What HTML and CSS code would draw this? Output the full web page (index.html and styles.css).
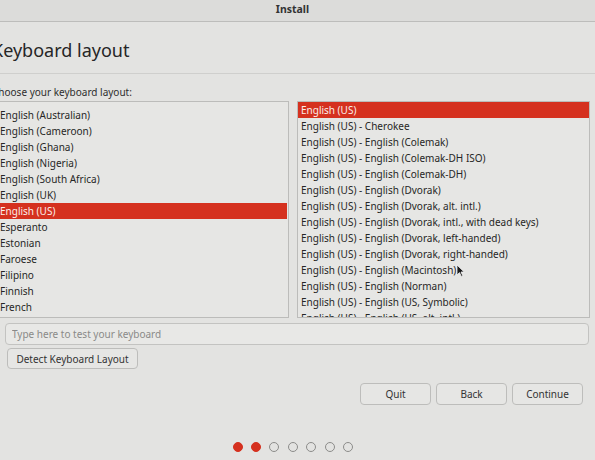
FILE: index.html
```html
<!DOCTYPE html>
<html lang="en">
<head>
<meta charset="utf-8">
<title>Install</title>
<link rel="stylesheet" href="styles.css">
</head>
<body>
<div class="titlebar">Install</div>
<div class="main">
  <div class="header"><h1 class="heading">Keyboard layout</h1></div>
  <div class="label">Choose your keyboard layout:</div>
  <div class="lists">
    <div class="list list-left">
      <div class="list-inner scrolled">
        <div class="row">English (Australian)</div>
        <div class="row">English (Cameroon)</div>
        <div class="row">English (Ghana)</div>
        <div class="row">English (Nigeria)</div>
        <div class="row">English (South Africa)</div>
        <div class="row">English (UK)</div>
        <div class="row selected">English (US)</div>
        <div class="row">Esperanto</div>
        <div class="row">Estonian</div>
        <div class="row">Faroese</div>
        <div class="row">Filipino</div>
        <div class="row">Finnish</div>
        <div class="row">French</div>
      </div>
    </div>
    <div class="list list-right">
      <div class="list-inner">
        <div class="row selected">English (US)</div>
        <div class="row">English (US) - Cherokee</div>
        <div class="row">English (US) - English (Colemak)</div>
        <div class="row">English (US) - English (Colemak-DH ISO)</div>
        <div class="row">English (US) - English (Colemak-DH)</div>
        <div class="row">English (US) - English (Dvorak)</div>
        <div class="row">English (US) - English (Dvorak, alt. intl.)</div>
        <div class="row">English (US) - English (Dvorak, intl., with dead keys)</div>
        <div class="row">English (US) - English (Dvorak, left-handed)</div>
        <div class="row">English (US) - English (Dvorak, right-handed)</div>
        <div class="row">English (US) - English (Macintosh)<svg class="cursor" width="9" height="13" viewBox="0 0 9 13"><path d="M1 1 L1 11 L3.5 8.6 L5.3 12.4 L6.8 11.7 L5 8 L8.2 8 Z" fill="#1a1a1a" stroke="#f2f2f2" stroke-width="0.8"/></svg></div>
        <div class="row">English (US) - English (Norman)</div>
        <div class="row">English (US) - English (US, Symbolic)</div>
        <div class="row">English (US) - English (US, alt. intl.)</div>
      </div>
    </div>
  </div>
  <input class="test-input" type="text" placeholder="Type here to test your keyboard">
  <button class="btn detect">Detect Keyboard Layout</button>
  <div class="actions">
    <button class="btn action">Quit</button>
    <button class="btn action">Back</button>
    <button class="btn action">Continue</button>
  </div>
  <div class="dots">
    <span class="dot on"></span>
    <span class="dot on"></span>
    <span class="dot"></span>
    <span class="dot"></span>
    <span class="dot"></span>
    <span class="dot"></span>
    <span class="dot"></span>
  </div>
</div>
</body>
</html>
```
FILE: styles.css
```css
html, body {
  margin: 0;
  padding: 0;
  background: #e3e3e1;
  overflow: hidden;
}
body {
  width: 595px;
  height: 460px;
  font-family: "Noto Sans", "DejaVu Sans", sans-serif;
  font-size: 10px;
  color: #2a2a2a;
}
.titlebar {
  height: 21px;
  line-height: 19px;
  background: #dcdcda;
  border-bottom: 1px solid #bdbdbb;
  text-align: center;
  padding-right: 10px;
  font-weight: 700;
  font-size: 10.5px;
  color: #333;
}
.main {
  margin-left: -8px;
  width: 603px;
}
.header {
  padding: 16px 0 11px 0;
  border-bottom: 1px solid #cfcfcd;
}
.heading {
  margin: 0;
  font-size: 18px;
  line-height: 24px;
  font-weight: 400;
  color: #262626;
}
.label {
  margin-top: 11px;
  line-height: 14px;
  font-size: 10px;
  color: #2e2e2e;
}
.lists {
  display: grid;
  grid-template-columns: 294px 293px;
  column-gap: 8px;
  margin: 2px 0 0 3px;
  height: 217px;
}
.list {
  border: 1px solid #bcbcba;
  background: #e6e6e4;
  overflow: hidden;
}
.list-inner.scrolled {
  padding-top: 5px;
}
.row {
  height: 16px;
  line-height: 16px;
  padding-left: 4px;
  white-space: nowrap;
  color: #262626;
}
.list-right .row {
  padding-left: 3px;
}
.row.selected {
  background: #d5311f;
  color: #fbeeea;
}
.list-left .row.selected {
  margin: 0 1px;
  padding-left: 3px;
}
.cursor {
  vertical-align: -3px;
}
.test-input {
  display: block;
  box-sizing: border-box;
  margin: 5px 0 0 13px;
  width: 584px;
  height: 22px;
  padding: 0 6px;
  border: 1px solid #c3c3c1;
  border-radius: 4px;
  background: #e8e8e6;
  font-family: inherit;
  font-size: 10px;
  color: #333;
}
.test-input::placeholder {
  color: #8a8a88;
}
.btn {
  box-sizing: border-box;
  display: block;
  height: 21px;
  border: 1px solid #bdbdbb;
  border-radius: 4px;
  background: #e6e6e4;
  font-family: inherit;
  font-size: 10px;
  color: #333;
  padding: 0;
}
.detect {
  margin: 3px 0 0 15px;
  width: 131px;
}
.actions {
  display: flex;
  justify-content: flex-end;
  gap: 5px;
  margin-top: 14px;
  padding-right: 12px;
}
.action {
  width: 71px;
  height: 22px;
}
.dots {
  display: flex;
  gap: 8.4px;
  margin-top: 37px;
  padding-left: 240.6px;
}
.dot {
  box-sizing: border-box;
  width: 10px;
  height: 10px;
  border-radius: 50%;
  border: 1.2px solid #8c8c8a;
}
.dot.on {
  background: #d5311f;
  border-color: #d5311f;
}
```
